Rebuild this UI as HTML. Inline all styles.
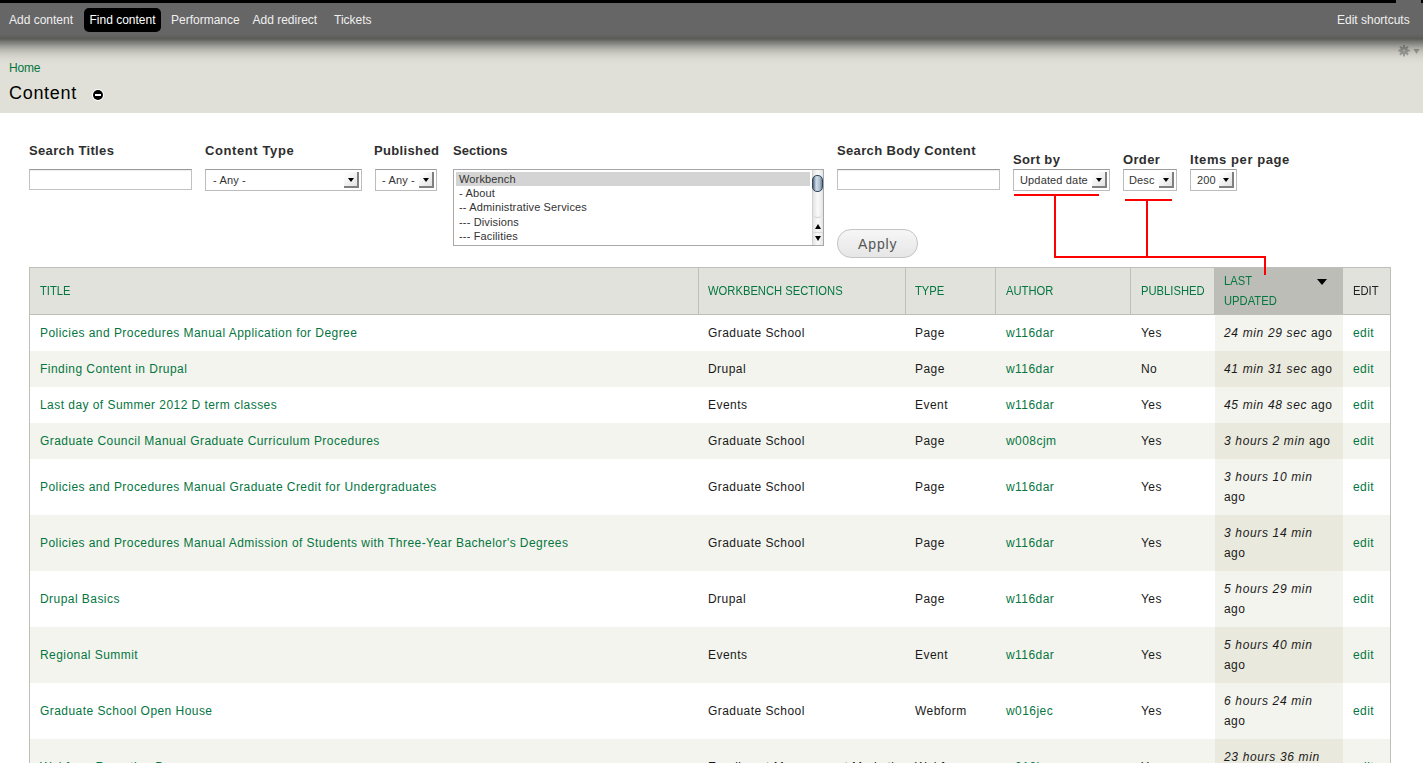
<!DOCTYPE html>
<html><head><meta charset="utf-8"><title>Content</title>
<style>
html,body{margin:0;padding:0;}
body{width:1423px;height:763px;overflow:hidden;position:relative;background:#fff;font-family:"Liberation Sans",sans-serif;color:#1a1a1a;}
div{position:absolute;}
.tb{left:-60px;top:0;width:1543px;height:38px;background:linear-gradient(#666 0,#666 34px,#5d5e59 38px);box-shadow:0 3px 20px #000;z-index:2;}
.tbi{top:10px;font-size:12px;line-height:20px;color:#f0f0f0;white-space:nowrap;z-index:3;}
.hdr{left:0;top:0;width:1423px;height:113px;background:#e0e0d8;}
.lbl{font-size:13px;font-weight:bold;color:#2e2e2e;white-space:nowrap;letter-spacing:0.35px;line-height:16px;}
.inp{background:#fff;border:1px solid #c2c2c2;border-top-color:#9a9a9a;box-sizing:border-box;box-shadow:inset 0 1px 1px #eee;}
.sel{background:#fff;border:1px solid #bcbcbc;border-top-color:#9c9c9c;box-sizing:border-box;}
.selt{font-size:11px;color:#333;line-height:14px;white-space:nowrap;letter-spacing:0.15px;}
.arr{width:15px;height:16px;box-sizing:border-box;background:linear-gradient(135deg,#fdfdfd 20%,#e2e2e2);border-right:2px solid #808080;border-bottom:2px solid #808080;}
.arr:after{content:"";position:absolute;left:4px;top:5.5px;border-left:3.5px solid transparent;border-right:3.5px solid transparent;border-top:4px solid #000;}
.red{background:#f00;}
.rw{left:29px;width:1361px;}
.td{font-size:12px;line-height:20px;white-space:nowrap;letter-spacing:0.45px;color:#1a1a1a;}
.td i{letter-spacing:0.65px;}
.lk{color:#05763f;}
.th{font-size:12px;line-height:20px;white-space:nowrap;color:#05763f;transform:scaleX(0.935);transform-origin:0 0;}
</style></head><body>
<div class="hdr"></div>
<div class="tb"></div>
<div style="left:0;top:0;width:1396px;height:3px;background:#000;z-index:3"></div>
<div style="left:1421px;top:0;width:2px;height:3px;background:#000;z-index:3"></div>
<div style="left:84px;top:8px;width:77px;height:24px;background:#000;border-radius:5px;z-index:3"></div>
<div class="tbi" style="left:9px">Add content</div>
<div class="tbi" style="left:89.5px;color:#fff">Find content</div>
<div class="tbi" style="left:171px">Performance</div>
<div class="tbi" style="left:252.5px">Add redirect</div>
<div class="tbi" style="left:334px">Tickets</div>
<div class="tbi" style="left:1337px">Edit shortcuts</div>

<div style="left:9px;top:58px;font-size:12px;line-height:20px;color:#05763f;letter-spacing:-0.2px">Home</div>
<div style="left:9px;top:82px;font-size:18px;line-height:22px;color:#000;letter-spacing:0.7px">Content</div>
<div style="left:93px;top:90px;width:10px;height:10px;border-radius:50%;background:#000;box-shadow:0 0 0 1px #fff"></div>
<div style="left:95px;top:94px;width:6px;height:2px;background:#fff"></div>

<svg style="position:absolute;left:1396px;top:43px" width="27" height="16" viewBox="0 0 27 16"><defs><filter id="bl"><feGaussianBlur stdDeviation="0.4"/></filter></defs>
<g fill="#a3a49e" filter="url(#bl)">
<circle cx="8" cy="7.6" r="3.8"/>
<rect x="7" y="2" width="2" height="11.4"/>
<rect x="2.4" y="6.6" width="11.4" height="2"/>
<rect x="7" y="2" width="2" height="11.4" transform="rotate(45 8 7.6)"/>
<rect x="7" y="2" width="2" height="11.4" transform="rotate(-45 8 7.6)"/>
<path d="M17.5 6 L23.5 6 L20.5 11 Z"/>
</g>
<circle cx="8" cy="7.6" r="1.2" fill="#c8c8c2"/>
</svg>
<!-- labels -->
<div class="lbl" style="left:29px;top:143px">Search Titles</div>
<div class="lbl" style="left:205px;top:143px;letter-spacing:0.6px">Content Type</div>
<div class="lbl" style="left:374px;top:143px">Published</div>
<div class="lbl" style="left:453px;top:143px;letter-spacing:0.05px">Sections</div>
<div class="lbl" style="left:837px;top:143px">Search Body Content</div>
<div class="lbl" style="left:1013px;top:152px">Sort by</div>
<div class="lbl" style="left:1123px;top:152px">Order</div>
<div class="lbl" style="left:1190px;top:152px;letter-spacing:0.58px">Items per page</div>

<!-- inputs -->
<div class="inp" style="left:29px;top:169px;width:163px;height:21px"></div>
<div class="sel" style="left:205px;top:169px;width:157px;height:22px"></div>
<div class="selt" style="left:213px;top:173px">- Any -</div>
<div class="arr" style="left:344px;top:172px"></div>
<div class="sel" style="left:375px;top:169px;width:62px;height:22px"></div>
<div class="selt" style="left:382px;top:173px">- Any -</div>
<div class="arr" style="left:419px;top:172px"></div>

<div class="sel" style="left:453px;top:169px;width:371px;height:77px;border-color:#a8a8a8"></div>
<div style="left:456px;top:172px;width:354px;height:14px;background:#d4d4d4"></div>
<div class="selt" style="left:459px;top:172px">Workbench</div>
<div class="selt" style="left:459px;top:186px">- About</div>
<div class="selt" style="left:459px;top:200px">-- Administrative Services</div>
<div class="selt" style="left:459px;top:215px">--- Divisions</div>
<div class="selt" style="left:459px;top:229px">--- Facilities</div>
<div style="left:812px;top:170px;width:11px;height:75px;background:linear-gradient(90deg,#e4e4e4,#fafafa 50%,#e4e4e4);border-left:1px solid #d0d0d0;box-sizing:border-box"></div>
<div style="left:812px;top:175px;width:10.5px;height:17px;box-sizing:border-box;border:1px solid #33465c;border-radius:5px;background:linear-gradient(90deg,#4d6179,#cfdbe7 35%,#b4c3d3 70%,#6d8198);"></div>
<div style="left:813px;top:212px;width:9px;height:6px;border-radius:0 0 5px 5px;border-bottom:1px solid #cfcfcf;box-sizing:border-box"></div>
<div style="left:812px;top:232px;width:11px;height:1px;background:#d8d8d8"></div>
<div style="left:814.5px;top:224px;border-left:3px solid transparent;border-right:3px solid transparent;border-bottom:5px solid #000"></div>
<div style="left:814.5px;top:236px;border-left:3px solid transparent;border-right:3px solid transparent;border-top:5px solid #000"></div>

<div class="inp" style="left:837px;top:169px;width:163px;height:21px"></div>
<div style="left:837px;top:229px;width:81px;height:29px;box-sizing:border-box;border:1px solid #c4c4c4;border-radius:14px;background:linear-gradient(#f6f6f6,#e6e6e6)"></div>
<div style="left:858px;top:235px;font-size:14px;line-height:18px;color:#555;letter-spacing:0.9px">Apply</div>

<div class="sel" style="left:1013px;top:169px;width:97px;height:22px"></div>
<div class="selt" style="left:1020px;top:173px">Updated date</div>
<div class="arr" style="left:1092px;top:172px"></div>
<div class="sel" style="left:1123px;top:169px;width:54px;height:22px"></div>
<div class="selt" style="left:1129px;top:173px">Desc</div>
<div class="arr" style="left:1159px;top:172px"></div>
<div class="sel" style="left:1190px;top:169px;width:47px;height:22px"></div>
<div class="selt" style="left:1197px;top:173px">200</div>
<div class="arr" style="left:1219px;top:172px"></div>

<!-- red lines -->
<div class="red" style="left:1014px;top:194px;width:85px;height:2px"></div>
<div class="red" style="left:1054px;top:195px;width:2px;height:62px"></div>
<div class="red" style="left:1125px;top:199px;width:47px;height:2px"></div>
<div class="red" style="left:1146px;top:200px;width:2px;height:57px"></div>
<div class="red" style="left:1054px;top:256px;width:212px;height:2px"></div>

<!-- table header -->
<div style="left:29px;top:267px;width:1362px;height:48px;box-sizing:border-box;border:1px solid #bebfb9;background:#e1e2dc"></div>
<div style="left:1214px;top:268px;width:129px;height:46px;background:#bdbdb7"></div>
<div style="left:698px;top:268px;width:1px;height:46px;background:#bebfb9"></div>
<div style="left:905px;top:268px;width:1px;height:46px;background:#bebfb9"></div>
<div style="left:995px;top:268px;width:1px;height:46px;background:#bebfb9"></div>
<div style="left:1130px;top:268px;width:1px;height:46px;background:#bebfb9"></div>
<div class="red" style="left:1264px;top:256px;width:2px;height:19px;z-index:2"></div>
<div class="th" style="left:40px;top:281px">TITLE</div>
<div class="th" style="left:708px;top:281px">WORKBENCH SECTIONS</div>
<div class="th" style="left:915px;top:281px">TYPE</div>
<div class="th" style="left:1006px;top:281px">AUTHOR</div>
<div class="th" style="left:1141px;top:281px">PUBLISHED</div>
<div class="th" style="left:1224px;top:271px">LAST<br>UPDATED</div>
<div style="left:1317px;top:279px;border-left:5.5px solid transparent;border-right:5.5px solid transparent;border-top:6px solid #000"></div>
<div class="th" style="left:1353px;top:281px;color:#222">EDIT</div>

<!-- rows -->
<div class="rw" style="top:315px;height:36px;background:#fff"></div>
<div class="rw" style="top:315px;height:36px;left:1215px;width:128px;background:#f3f4ee"></div>
<div class="td" style="left:40px;top:323.0px"><span class="lk">Policies and Procedures Manual Application for Degree</span></div>
<div class="td" style="left:708px;top:323.0px">Graduate School</div>
<div class="td" style="left:915px;top:323.0px">Page</div>
<div class="td" style="left:1006px;top:323.0px"><span class="lk">w116dar</span></div>
<div class="td" style="left:1141px;top:323.0px">Yes</div>
<div class="td" style="left:1224px;top:323.0px"><i>24 min 29 sec</i> ago</div>
<div class="td" style="left:1353px;top:323.0px"><span class="lk">edit</span></div>
<div class="rw" style="top:351px;height:36px;background:#f3f4ee"></div>
<div class="rw" style="top:351px;height:36px;left:1215px;width:128px;background:#e9e9dd"></div>
<div class="td" style="left:40px;top:359.0px"><span class="lk">Finding Content in Drupal</span></div>
<div class="td" style="left:708px;top:359.0px">Drupal</div>
<div class="td" style="left:915px;top:359.0px">Page</div>
<div class="td" style="left:1006px;top:359.0px"><span class="lk">w116dar</span></div>
<div class="td" style="left:1141px;top:359.0px">No</div>
<div class="td" style="left:1224px;top:359.0px"><i>41 min 31 sec</i> ago</div>
<div class="td" style="left:1353px;top:359.0px"><span class="lk">edit</span></div>
<div class="rw" style="top:387px;height:36px;background:#fff"></div>
<div class="rw" style="top:387px;height:36px;left:1215px;width:128px;background:#f3f4ee"></div>
<div class="td" style="left:40px;top:395.0px"><span class="lk">Last day of Summer 2012 D term classes</span></div>
<div class="td" style="left:708px;top:395.0px">Events</div>
<div class="td" style="left:915px;top:395.0px">Event</div>
<div class="td" style="left:1006px;top:395.0px"><span class="lk">w116dar</span></div>
<div class="td" style="left:1141px;top:395.0px">Yes</div>
<div class="td" style="left:1224px;top:395.0px"><i>45 min 48 sec</i> ago</div>
<div class="td" style="left:1353px;top:395.0px"><span class="lk">edit</span></div>
<div class="rw" style="top:423px;height:36px;background:#f3f4ee"></div>
<div class="rw" style="top:423px;height:36px;left:1215px;width:128px;background:#e9e9dd"></div>
<div class="td" style="left:40px;top:431.0px"><span class="lk">Graduate Council Manual Graduate Curriculum Procedures</span></div>
<div class="td" style="left:708px;top:431.0px">Graduate School</div>
<div class="td" style="left:915px;top:431.0px">Page</div>
<div class="td" style="left:1006px;top:431.0px"><span class="lk">w008cjm</span></div>
<div class="td" style="left:1141px;top:431.0px">Yes</div>
<div class="td" style="left:1224px;top:431.0px"><i>3 hours 2 min</i> ago</div>
<div class="td" style="left:1353px;top:431.0px"><span class="lk">edit</span></div>
<div class="rw" style="top:459px;height:56px;background:#fff"></div>
<div class="rw" style="top:459px;height:56px;left:1215px;width:128px;background:#f3f4ee"></div>
<div class="td" style="left:40px;top:477.0px"><span class="lk">Policies and Procedures Manual Graduate Credit for Undergraduates</span></div>
<div class="td" style="left:708px;top:477.0px">Graduate School</div>
<div class="td" style="left:915px;top:477.0px">Page</div>
<div class="td" style="left:1006px;top:477.0px"><span class="lk">w116dar</span></div>
<div class="td" style="left:1141px;top:477.0px">Yes</div>
<div class="td" style="left:1224px;top:467.0px"><i>3 hours 10 min</i><br>ago</div>
<div class="td" style="left:1353px;top:477.0px"><span class="lk">edit</span></div>
<div class="rw" style="top:515px;height:56px;background:#f3f4ee"></div>
<div class="rw" style="top:515px;height:56px;left:1215px;width:128px;background:#e9e9dd"></div>
<div class="td" style="left:40px;top:533.0px"><span class="lk">Policies and Procedures Manual Admission of Students with Three-Year Bachelor's Degrees</span></div>
<div class="td" style="left:708px;top:533.0px">Graduate School</div>
<div class="td" style="left:915px;top:533.0px">Page</div>
<div class="td" style="left:1006px;top:533.0px"><span class="lk">w116dar</span></div>
<div class="td" style="left:1141px;top:533.0px">Yes</div>
<div class="td" style="left:1224px;top:523.0px"><i>3 hours 14 min</i><br>ago</div>
<div class="td" style="left:1353px;top:533.0px"><span class="lk">edit</span></div>
<div class="rw" style="top:571px;height:56px;background:#fff"></div>
<div class="rw" style="top:571px;height:56px;left:1215px;width:128px;background:#f3f4ee"></div>
<div class="td" style="left:40px;top:589.0px"><span class="lk">Drupal Basics</span></div>
<div class="td" style="left:708px;top:589.0px">Drupal</div>
<div class="td" style="left:915px;top:589.0px">Page</div>
<div class="td" style="left:1006px;top:589.0px"><span class="lk">w116dar</span></div>
<div class="td" style="left:1141px;top:589.0px">Yes</div>
<div class="td" style="left:1224px;top:579.0px"><i>5 hours 29 min</i><br>ago</div>
<div class="td" style="left:1353px;top:589.0px"><span class="lk">edit</span></div>
<div class="rw" style="top:627px;height:56px;background:#f3f4ee"></div>
<div class="rw" style="top:627px;height:56px;left:1215px;width:128px;background:#e9e9dd"></div>
<div class="td" style="left:40px;top:645.0px"><span class="lk">Regional Summit</span></div>
<div class="td" style="left:708px;top:645.0px">Events</div>
<div class="td" style="left:915px;top:645.0px">Event</div>
<div class="td" style="left:1006px;top:645.0px"><span class="lk">w116dar</span></div>
<div class="td" style="left:1141px;top:645.0px">Yes</div>
<div class="td" style="left:1224px;top:635.0px"><i>5 hours 40 min</i><br>ago</div>
<div class="td" style="left:1353px;top:645.0px"><span class="lk">edit</span></div>
<div class="rw" style="top:683px;height:56px;background:#fff"></div>
<div class="rw" style="top:683px;height:56px;left:1215px;width:128px;background:#f3f4ee"></div>
<div class="td" style="left:40px;top:701.0px"><span class="lk">Graduate School Open House</span></div>
<div class="td" style="left:708px;top:701.0px">Graduate School</div>
<div class="td" style="left:915px;top:701.0px">Webform</div>
<div class="td" style="left:1006px;top:701.0px"><span class="lk">w016jec</span></div>
<div class="td" style="left:1141px;top:701.0px">Yes</div>
<div class="td" style="left:1224px;top:691.0px"><i>6 hours 24 min</i><br>ago</div>
<div class="td" style="left:1353px;top:701.0px"><span class="lk">edit</span></div>
<div class="rw" style="top:739px;height:56px;background:#f3f4ee"></div>
<div class="rw" style="top:739px;height:56px;left:1215px;width:128px;background:#e9e9dd"></div>
<div class="td" style="left:40px;top:757.0px"><span class="lk">Webform Reporting Demo</span></div>
<div class="td" style="left:708px;top:757.0px">Enrollment Management Marketing</div>
<div class="td" style="left:915px;top:757.0px">Webform</div>
<div class="td" style="left:1006px;top:757.0px"><span class="lk">w016jec</span></div>
<div class="td" style="left:1141px;top:757.0px">Yes</div>
<div class="td" style="left:1224px;top:747.0px"><i>23 hours 36 min</i><br>ago</div>
<div class="td" style="left:1353px;top:757.0px"><span class="lk">edit</span></div>
<div style="left:29px;top:315px;width:1px;height:448px;background:#bebfb9"></div>
<div style="left:1390px;top:315px;width:1px;height:448px;background:#bebfb9"></div>
</body></html>
